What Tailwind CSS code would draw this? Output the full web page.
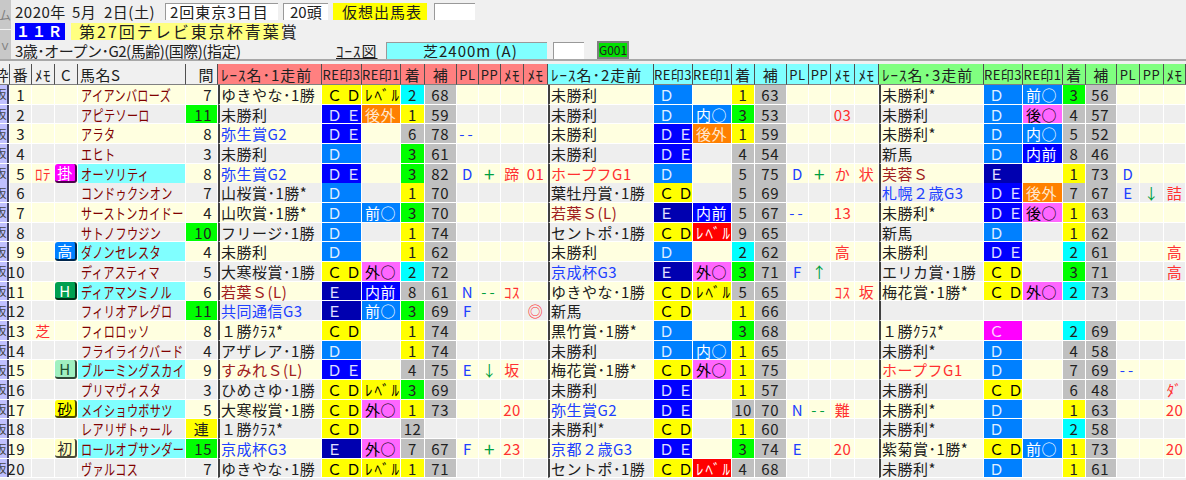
<!DOCTYPE html>
<html lang="ja"><head><meta charset="utf-8"><title>出馬表</title><script src="https://cdn.jsdelivr.net/npm/@tailwindcss/browser@4"></script></head>
<body>
<div class="w-[1186px] h-[480px] overflow-hidden bg-[#f0f0f0] text-[15px] leading-none text-[#202020] font-['Noto_Sans_CJK_JP',sans-serif]">
<div class="flex h-[61px] border-b-2 border-[#a8a8a8]">
<div class="w-[11px] flex flex-col gap-px text-xs text-[#808080]"><div class="flex-1 bg-[#c8c8c8] flex items-center justify-end overflow-hidden"><span class="shrink-0">ム</span></div><div class="flex-1 bg-[#c8c8c8] flex items-center justify-end overflow-hidden"><span class="shrink-0">ｖ</span></div></div>
<div class="flex flex-col pl-1 pt-[2px] whitespace-nowrap">
<div class="flex items-center h-[18px]"><span class="w-[150px] flex"><span class="w-[57px] tracking-[.5px]">2020年</span><span class="w-[32px] tracking-[.5px]">5月</span><span class="tracking-[.5px]">2日(土)</span></span><span class="w-[113px] h-[17px] bg-white border-t border-l border-[#999] flex items-center pl-1 tracking-[1px]">2回東京3日目</span><span class="ml-[5px] w-[45px] h-[17px] bg-white border-t border-l border-[#999] flex items-center pl-[6px]">20頭</span><span class="ml-[5px] w-[94px] h-[17px] bg-[#ffff00] flex items-center pl-[9px] tracking-[1px]">仮想出馬表</span><span class="ml-[7px] w-[41px] h-[17px] bg-white border-t border-l border-[#999]"></span></div>
<div class="flex items-center h-[18px] mt-[2px]"><span class="w-[50px] h-[17px] bg-[#0000ff] text-white flex items-center justify-center font-bold text-[14px] tracking-[2px]">１１Ｒ</span><span class="ml-[6px] w-[212px] h-[17px] bg-[#ffff80] flex items-center pl-2 text-[16px] tracking-[2px]">第27回テレビ東京杯青葉賞</span></div>
<div class="flex items-center h-[18px] mt-[1px]"><span class="w-[321px] tracking-[-.5px]">3歳･オープン･G2(馬齢)(国際)(指定)</span><span class="underline text-[15px] tracking-[1px] w-[50px]">ｺｰｽ図</span><span class="w-[161px] h-[17px] bg-[#80ffff] border-t border-l border-[#999] flex items-center pl-[36px] tracking-[1px]">芝2400m&nbsp;(A)</span><span class="ml-[6px] w-[31px] h-[17px] bg-white border-t border-l border-[#999]"></span><span class="ml-[13px] w-[32px] h-[18px] bg-[#00e000] border-2 border-[#808080] text-xs flex items-center justify-center">G001</span></div>
</div>
</div>
<div class="mt-[3px] tracking-[.5px] grid grid-cols-[10px_22px_23px_23px_108px_32px_104px_40px_39px_24px_32px_22px_22px_23px_24px_106px_39px_39px_23px_32px_22px_22px_24px_24px_105px_39px_40px_23px_31px_23px_24px_22px]">

<div class="grid grid-cols-subgrid col-span-full h-[21px] *:flex *:items-center *:border-r *:border-b *:border-r-[#505050] *:border-b-[#808080] *:whitespace-nowrap">
<p class="justify-end overflow-hidden"><span class="shrink-0">枠</span></p><p class="justify-center">番</p><p class="justify-center">ﾒﾓ</p><p class="justify-center">C</p><p class="pl-[2px]">馬名S</p><p class="justify-end pr-[3px]">間</p>
<p class="bg-[#ff8080] pl-[3px] tracking-[1px]">ﾚｰｽ名･1走前</p><p class="bg-[#ff8080] justify-center text-[13px]">RE印3</p><p class="bg-[#ff8080] justify-center text-[13px]">RE印1</p><p class="bg-[#ff8080] justify-center">着</p><p class="bg-[#ff8080] justify-center">補</p><p class="bg-[#ff8080] justify-center text-[13px]">PL</p><p class="bg-[#ff8080] justify-center text-[13px]">PP</p><p class="bg-[#ff8080] justify-center">ﾒﾓ</p><p class="bg-[#ff8080] justify-center">ﾒﾓ</p>
<p class="bg-[#80ffff] pl-[3px] tracking-[1px]">ﾚｰｽ名･2走前</p><p class="bg-[#80ffff] justify-center text-[13px]">RE印3</p><p class="bg-[#80ffff] justify-center text-[13px]">RE印1</p><p class="bg-[#80ffff] justify-center">着</p><p class="bg-[#80ffff] justify-center">補</p><p class="bg-[#80ffff] justify-center text-[13px]">PL</p><p class="bg-[#80ffff] justify-center text-[13px]">PP</p><p class="bg-[#80ffff] justify-center">ﾒﾓ</p><p class="bg-[#80ffff] justify-center">ﾒﾓ</p>
<p class="bg-[#80ff80] pl-[3px] tracking-[1px]">ﾚｰｽ名･3走前</p><p class="bg-[#80ff80] justify-center text-[13px]">RE印3</p><p class="bg-[#80ff80] justify-center text-[13px]">RE印1</p><p class="bg-[#80ff80] justify-center">着</p><p class="bg-[#80ff80] justify-center">補</p><p class="bg-[#80ff80] justify-center text-[13px]">PL</p><p class="bg-[#80ff80] justify-center text-[13px]">PP</p><p class="bg-[#80ff80] justify-center">ﾒﾓ</p>
</div>

<!-- 1 -->
<div class="grid grid-cols-subgrid col-span-full h-[19.68px] bg-[#ffffe0] *:flex *:items-center *:border-r *:border-b *:border-r-white *:border-b-white *:whitespace-nowrap">
<p><span class="flex items-center justify-end overflow-hidden w-full h-full bg-[#c0c0ff] border-r-2 border-[#404060] text-xs text-[#444]"><span class="shrink-0">阪</span></span></p><p class="justify-end pr-[6px]">1</p><p></p><p></p><p class="pl-[3px] text-[#800000]"><span class="origin-left scale-x-[.74]">アイアンバローズ</span></p><p class="justify-end pr-[5px]">7</p>
<p class="border-l-2 border-l-[#404040] pl-px">ゆきやな･1勝</p><p class="bg-[#ffff00] text-black pl-[5px] tracking-[4px]">ＣＤ</p><p class="bg-[#ffff00] text-black pl-[3px] tracking-[2px]">ﾚﾍﾞﾙ</p><p class="justify-center bg-[#00ffff]">2</p><p class="justify-end pr-[7px] bg-[#c0c0c0]">68</p><p></p><p></p><p></p><p></p>
<p class="border-l-2 border-l-[#404040] pl-px">未勝利</p><p class="bg-[#0080ff] text-[#e0f0ff] pl-[5px]">Ｄ</p><p></p><p class="justify-center bg-[#ffff00]">1</p><p class="justify-end pr-[7px] bg-[#c0c0c0]">63</p><p></p><p></p><p></p><p></p>
<p class="border-l-2 border-l-[#404040] pl-px">未勝利*</p><p class="bg-[#0080ff] text-[#e0f0ff] pl-[5px]">Ｄ</p><p class="bg-[#0080ff] text-white pl-[3px]">前○</p><p class="justify-center bg-[#00ff00]">3</p><p class="justify-end pr-[7px] bg-[#c0c0c0]">56</p><p></p><p></p><p></p>
</div>
<!-- 2 -->
<div class="grid grid-cols-subgrid col-span-full h-[19.68px] bg-[#eeeeee] *:flex *:items-center *:border-r *:border-b *:border-r-white *:border-b-white *:whitespace-nowrap">
<p><span class="flex items-center justify-end overflow-hidden w-full h-full bg-[#c0c0ff] border-r-2 border-[#404060] text-xs text-[#444]"><span class="shrink-0">阪</span></span></p><p class="justify-end pr-[6px]">2</p><p></p><p></p><p class="pl-[3px] text-[#800000]"><span class="origin-left scale-x-[.74]">アピテソーロ</span></p><p class="justify-end pr-[5px] bg-[#00ff00]">11</p>
<p class="border-l-2 border-l-[#404040] pl-px">未勝利</p><p class="bg-[#0000ff] text-[#e0e0ff] pl-[5px] tracking-[4px]">ＤＥ</p><p class="bg-[#ff8000] text-[#ffe8d0] pl-[3px]">後外</p><p class="justify-center bg-[#ffff00]">1</p><p class="justify-end pr-[7px] bg-[#c0c0c0]">59</p><p></p><p></p><p></p><p></p>
<p class="border-l-2 border-l-[#404040] pl-px">未勝利</p><p class="bg-[#0080ff] text-[#e0f0ff] pl-[5px]">Ｄ</p><p class="bg-[#0080ff] text-white pl-[3px]">内○</p><p class="justify-center bg-[#00ff00]">3</p><p class="justify-end pr-[7px] bg-[#c0c0c0]">53</p><p></p><p></p><p class="justify-center text-[#ff3030]">03</p><p></p>
<p class="border-l-2 border-l-[#404040] pl-px">未勝利</p><p class="bg-[#0080ff] text-[#e0f0ff] pl-[5px]">Ｄ</p><p class="bg-[#ff66ff] text-black pl-[3px]">後○</p><p class="justify-center bg-[#c0c0c0]">4</p><p class="justify-end pr-[7px] bg-[#c0c0c0]">57</p><p></p><p></p><p></p>
</div>
<!-- 3 -->
<div class="grid grid-cols-subgrid col-span-full h-[19.68px] bg-[#ffffe0] *:flex *:items-center *:border-r *:border-b *:border-r-white *:border-b-white *:whitespace-nowrap">
<p><span class="flex items-center justify-end overflow-hidden w-full h-full bg-[#c0c0ff] border-r-2 border-[#404060] text-xs text-[#444]"><span class="shrink-0">阪</span></span></p><p class="justify-end pr-[6px]">3</p><p></p><p></p><p class="pl-[3px] text-[#800000]"><span class="origin-left scale-x-[.74]">アラタ</span></p><p class="justify-end pr-[5px]">8</p>
<p class="border-l-2 border-l-[#404040] pl-px text-[#2040ff]">弥生賞G2</p><p class="bg-[#0000ff] text-[#e0e0ff] pl-[5px] tracking-[4px]">ＤＥ</p><p></p><p class="justify-center bg-[#c0c0c0]">6</p><p class="justify-end pr-[7px] bg-[#c0c0c0]">78</p><p class="justify-center text-[#2040ff] tracking-[3px]">--</p><p></p><p></p><p></p>
<p class="border-l-2 border-l-[#404040] pl-px">未勝利</p><p class="bg-[#0000ff] text-[#e0e0ff] pl-[5px] tracking-[4px]">ＤＥ</p><p class="bg-[#ff8000] text-[#ffe8d0] pl-[3px]">後外</p><p class="justify-center bg-[#ffff00]">1</p><p class="justify-end pr-[7px] bg-[#c0c0c0]">59</p><p></p><p></p><p></p><p></p>
<p class="border-l-2 border-l-[#404040] pl-px">未勝利*</p><p class="bg-[#0080ff] text-[#e0f0ff] pl-[5px]">Ｄ</p><p class="bg-[#0080ff] text-white pl-[3px]">内○</p><p class="justify-center bg-[#c0c0c0]">5</p><p class="justify-end pr-[7px] bg-[#c0c0c0]">52</p><p></p><p></p><p></p>
</div>
<!-- 4 -->
<div class="grid grid-cols-subgrid col-span-full h-[19.68px] bg-[#eeeeee] *:flex *:items-center *:border-r *:border-b *:border-r-white *:border-b-white *:whitespace-nowrap">
<p><span class="flex items-center justify-end overflow-hidden w-full h-full bg-[#c0c0ff] border-r-2 border-[#404060] text-xs text-[#444]"><span class="shrink-0">阪</span></span></p><p class="justify-end pr-[6px]">4</p><p></p><p></p><p class="pl-[3px] text-[#800000]"><span class="origin-left scale-x-[.74]">エヒト</span></p><p class="justify-end pr-[5px]">3</p>
<p class="border-l-2 border-l-[#404040] pl-px">未勝利</p><p class="bg-[#0080ff] text-[#e0f0ff] pl-[5px]">Ｄ</p><p></p><p class="justify-center bg-[#00ff00]">3</p><p class="justify-end pr-[7px] bg-[#c0c0c0]">61</p><p></p><p></p><p></p><p></p>
<p class="border-l-2 border-l-[#404040] pl-px">未勝利</p><p class="bg-[#0000ff] text-[#e0e0ff] pl-[5px] tracking-[4px]">ＤＥ</p><p></p><p class="justify-center bg-[#c0c0c0]">4</p><p class="justify-end pr-[7px] bg-[#c0c0c0]">54</p><p></p><p></p><p></p><p></p>
<p class="border-l-2 border-l-[#404040] pl-px">新馬</p><p class="bg-[#0080ff] text-[#e0f0ff] pl-[5px]">Ｄ</p><p class="bg-[#0000ff] text-white pl-[3px]">内前</p><p class="justify-center bg-[#c0c0c0]">8</p><p class="justify-end pr-[7px] bg-[#c0c0c0]">46</p><p></p><p></p><p></p>
</div>
<!-- 5 -->
<div class="grid grid-cols-subgrid col-span-full h-[19.68px] bg-[#ffffe0] *:flex *:items-center *:border-r *:border-b *:border-r-white *:border-b-white *:whitespace-nowrap">
<p><span class="flex items-center justify-end overflow-hidden w-full h-full bg-[#c0c0ff] border-r-2 border-[#404060] text-xs text-[#444]"><span class="shrink-0">阪</span></span></p><p class="justify-end pr-[6px]">5</p><p class="justify-center text-[#ff3030]">ﾛﾃ</p><p><span class="flex items-center justify-center w-full h-full rounded-[3px] border-r-2 border-b-2 border-black/70 bg-[#ff00ff] text-white">掛</span></p><p class="pl-[3px] text-[#800000] bg-[#80ffff]"><span class="origin-left scale-x-[.74]">オーソリティ</span></p><p class="justify-end pr-[5px]">8</p>
<p class="border-l-2 border-l-[#404040] pl-px text-[#2040ff]">弥生賞G2</p><p class="bg-[#0000ff] text-[#e0e0ff] pl-[5px] tracking-[4px]">ＤＥ</p><p></p><p class="justify-center bg-[#00ff00]">3</p><p class="justify-end pr-[7px] bg-[#c0c0c0]">82</p><p class="justify-center text-[#2040ff]">D</p><p class="justify-center text-[#00a040] text-[19px]">+</p><p class="justify-center text-[#ff3030]">蹄</p><p class="justify-center text-[#ff3030]">01</p>
<p class="border-l-2 border-l-[#404040] pl-px text-[#ff3030]">ホープフG1</p><p class="bg-[#0080ff] text-[#e0f0ff] pl-[5px]">Ｄ</p><p></p><p class="justify-center bg-[#c0c0c0]">5</p><p class="justify-end pr-[7px] bg-[#c0c0c0]">75</p><p class="justify-center text-[#2040ff]">D</p><p class="justify-center text-[#00a040] text-[19px]">+</p><p class="justify-center text-[#ff3030]">か</p><p class="justify-center text-[#ff3030]">状</p>
<p class="border-l-2 border-l-[#404040] pl-px text-[#a02020]">芙蓉Ｓ</p><p class="bg-[#0000b0] text-[#e0e0ff] pl-[5px]">Ｅ</p><p></p><p class="justify-center bg-[#ffff00]">1</p><p class="justify-end pr-[7px] bg-[#c0c0c0]">73</p><p class="justify-center text-[#2040ff]">D</p><p></p><p></p>
</div>
<!-- 6 -->
<div class="grid grid-cols-subgrid col-span-full h-[19.68px] bg-[#eeeeee] *:flex *:items-center *:border-r *:border-b *:border-r-white *:border-b-white *:whitespace-nowrap">
<p><span class="flex items-center justify-end overflow-hidden w-full h-full bg-[#c0c0ff] border-r-2 border-[#404060] text-xs text-[#444]"><span class="shrink-0">阪</span></span></p><p class="justify-end pr-[6px]">6</p><p></p><p></p><p class="pl-[3px] text-[#800000]"><span class="origin-left scale-x-[.74]">コンドゥクシオン</span></p><p class="justify-end pr-[5px]">7</p>
<p class="border-l-2 border-l-[#404040] pl-px">山桜賞･1勝*</p><p class="bg-[#0080ff] text-[#e0f0ff] pl-[5px]">Ｄ</p><p></p><p class="justify-center bg-[#ffff00]">1</p><p class="justify-end pr-[7px] bg-[#c0c0c0]">70</p><p></p><p></p><p></p><p></p>
<p class="border-l-2 border-l-[#404040] pl-px">葉牡丹賞･1勝</p><p class="bg-[#ffff00] text-black pl-[5px] tracking-[4px]">ＣＤ</p><p></p><p class="justify-center bg-[#c0c0c0]">5</p><p class="justify-end pr-[7px] bg-[#c0c0c0]">69</p><p></p><p></p><p></p><p></p>
<p class="border-l-2 border-l-[#404040] pl-px text-[#2040ff]">札幌２歳G3</p><p class="bg-[#0000ff] text-[#e0e0ff] pl-[5px] tracking-[4px]">ＤＥ</p><p class="bg-[#ff8000] text-[#ffe8d0] pl-[3px]">後外</p><p class="justify-center bg-[#c0c0c0]">7</p><p class="justify-end pr-[7px] bg-[#c0c0c0]">67</p><p class="justify-center text-[#2040ff]">E</p><p class="justify-center text-[#00a040]">↓</p><p class="justify-center text-[#ff3030]">詰</p>
</div>
<!-- 7 -->
<div class="grid grid-cols-subgrid col-span-full h-[19.68px] bg-[#ffffe0] *:flex *:items-center *:border-r *:border-b *:border-r-white *:border-b-white *:whitespace-nowrap">
<p><span class="flex items-center justify-end overflow-hidden w-full h-full bg-[#c0c0ff] border-r-2 border-[#404060] text-xs text-[#444]"><span class="shrink-0">阪</span></span></p><p class="justify-end pr-[6px]">7</p><p></p><p></p><p class="pl-[3px] text-[#800000]"><span class="origin-left scale-x-[.74]">サーストンカイドー</span></p><p class="justify-end pr-[5px]">4</p>
<p class="border-l-2 border-l-[#404040] pl-px">山吹賞･1勝*</p><p class="bg-[#0080ff] text-[#e0f0ff] pl-[5px]">Ｄ</p><p class="bg-[#0080ff] text-white pl-[3px]">前○</p><p class="justify-center bg-[#00ff00]">3</p><p class="justify-end pr-[7px] bg-[#c0c0c0]">70</p><p></p><p></p><p></p><p></p>
<p class="border-l-2 border-l-[#404040] pl-px text-[#a02020]">若葉Ｓ(L)</p><p class="bg-[#0000b0] text-[#e0e0ff] pl-[5px]">Ｅ</p><p class="bg-[#0000ff] text-white pl-[3px]">内前</p><p class="justify-center bg-[#c0c0c0]">5</p><p class="justify-end pr-[7px] bg-[#c0c0c0]">67</p><p class="justify-center text-[#2040ff] tracking-[3px]">--</p><p></p><p class="justify-center text-[#ff3030]">13</p><p></p>
<p class="border-l-2 border-l-[#404040] pl-px">未勝利*</p><p class="bg-[#0000ff] text-[#e0e0ff] pl-[5px] tracking-[4px]">ＤＥ</p><p class="bg-[#ff66ff] text-black pl-[3px]">後○</p><p class="justify-center bg-[#ffff00]">1</p><p class="justify-end pr-[7px] bg-[#c0c0c0]">63</p><p></p><p></p><p></p>
</div>
<!-- 8 -->
<div class="grid grid-cols-subgrid col-span-full h-[19.68px] bg-[#eeeeee] *:flex *:items-center *:border-r *:border-b *:border-r-white *:border-b-white *:whitespace-nowrap">
<p><span class="flex items-center justify-end overflow-hidden w-full h-full bg-[#c0c0ff] border-r-2 border-[#404060] text-xs text-[#444]"><span class="shrink-0">阪</span></span></p><p class="justify-end pr-[6px]">8</p><p></p><p></p><p class="pl-[3px] text-[#800000]"><span class="origin-left scale-x-[.74]">サトノフウジン</span></p><p class="justify-end pr-[5px] bg-[#00ff00]">10</p>
<p class="border-l-2 border-l-[#404040] pl-px">フリージ･1勝</p><p class="bg-[#0080ff] text-[#e0f0ff] pl-[5px]">Ｄ</p><p></p><p class="justify-center bg-[#ffff00]">1</p><p class="justify-end pr-[7px] bg-[#c0c0c0]">74</p><p></p><p></p><p></p><p></p>
<p class="border-l-2 border-l-[#404040] pl-px">セントポ･1勝</p><p class="bg-[#ffff00] text-black pl-[5px] tracking-[4px]">ＣＤ</p><p class="bg-[#ff0000] text-white pl-[3px] tracking-[2px]">ﾚﾍﾞﾙ</p><p class="justify-center bg-[#c0c0c0]">9</p><p class="justify-end pr-[7px] bg-[#c0c0c0]">65</p><p></p><p></p><p></p><p></p>
<p class="border-l-2 border-l-[#404040] pl-px">新馬</p><p class="bg-[#0080ff] text-[#e0f0ff] pl-[5px]">Ｄ</p><p></p><p class="justify-center bg-[#ffff00]">1</p><p class="justify-end pr-[7px] bg-[#c0c0c0]">62</p><p></p><p></p><p></p>
</div>
<!-- 9 -->
<div class="grid grid-cols-subgrid col-span-full h-[19.68px] bg-[#ffffe0] *:flex *:items-center *:border-r *:border-b *:border-r-white *:border-b-white *:whitespace-nowrap">
<p><span class="flex items-center justify-end overflow-hidden w-full h-full bg-[#c0c0ff] border-r-2 border-[#404060] text-xs text-[#444]"><span class="shrink-0">阪</span></span></p><p class="justify-end pr-[6px]">9</p><p></p><p><span class="flex items-center justify-center w-full h-full rounded-[3px] border-r-2 border-b-2 border-black/70 bg-[#0080ff] text-white">高</span></p><p class="pl-[3px] text-[#800000] bg-[#80ffff]"><span class="origin-left scale-x-[.74]">ダノンセレスタ</span></p><p class="justify-end pr-[5px]">4</p>
<p class="border-l-2 border-l-[#404040] pl-px">未勝利</p><p class="bg-[#0080ff] text-[#e0f0ff] pl-[5px]">Ｄ</p><p></p><p class="justify-center bg-[#ffff00]">1</p><p class="justify-end pr-[7px] bg-[#c0c0c0]">62</p><p></p><p></p><p></p><p></p>
<p class="border-l-2 border-l-[#404040] pl-px">未勝利</p><p class="bg-[#0080ff] text-[#e0f0ff] pl-[5px]">Ｄ</p><p></p><p class="justify-center bg-[#00ffff]">2</p><p class="justify-end pr-[7px] bg-[#c0c0c0]">62</p><p></p><p></p><p class="justify-center text-[#ff3030]">高</p><p></p>
<p class="border-l-2 border-l-[#404040] pl-px">未勝利</p><p class="bg-[#0000ff] text-[#e0e0ff] pl-[5px] tracking-[4px]">ＤＥ</p><p></p><p class="justify-center bg-[#00ffff]">2</p><p class="justify-end pr-[7px] bg-[#c0c0c0]">61</p><p></p><p></p><p class="justify-center text-[#ff3030]">高</p>
</div>
<!-- 10 -->
<div class="grid grid-cols-subgrid col-span-full h-[19.68px] bg-[#eeeeee] *:flex *:items-center *:border-r *:border-b *:border-r-white *:border-b-white *:whitespace-nowrap">
<p><span class="flex items-center justify-end overflow-hidden w-full h-full bg-[#c0c0ff] border-r-2 border-[#404060] text-xs text-[#444]"><span class="shrink-0">阪</span></span></p><p class="justify-end pr-[6px]">10</p><p></p><p></p><p class="pl-[3px] text-[#800000]"><span class="origin-left scale-x-[.74]">ディアスティマ</span></p><p class="justify-end pr-[5px]">5</p>
<p class="border-l-2 border-l-[#404040] pl-px">大寒桜賞･1勝</p><p class="bg-[#ffff00] text-black pl-[5px] tracking-[4px]">ＣＤ</p><p class="bg-[#ff66ff] text-black pl-[3px]">外○</p><p class="justify-center bg-[#00ffff]">2</p><p class="justify-end pr-[7px] bg-[#c0c0c0]">72</p><p></p><p></p><p></p><p></p>
<p class="border-l-2 border-l-[#404040] pl-px text-[#2040ff]">京成杯G3</p><p class="bg-[#0000b0] text-[#e0e0ff] pl-[5px]">Ｅ</p><p class="bg-[#ff66ff] text-black pl-[3px]">外○</p><p class="justify-center bg-[#00ff00]">3</p><p class="justify-end pr-[7px] bg-[#c0c0c0]">71</p><p class="justify-center text-[#2040ff]">F</p><p class="justify-center text-[#00a040]">↑</p><p></p><p></p>
<p class="border-l-2 border-l-[#404040] pl-px">エリカ賞･1勝</p><p class="bg-[#ffff00] text-black pl-[5px] tracking-[4px]">ＣＤ</p><p></p><p class="justify-center bg-[#00ff00]">3</p><p class="justify-end pr-[7px] bg-[#c0c0c0]">71</p><p></p><p></p><p class="justify-center text-[#ff3030]">高</p>
</div>
<!-- 11 -->
<div class="grid grid-cols-subgrid col-span-full h-[19.68px] bg-[#ffffe0] *:flex *:items-center *:border-r *:border-b *:border-r-white *:border-b-white *:whitespace-nowrap">
<p><span class="flex items-center justify-end overflow-hidden w-full h-full bg-[#c0c0ff] border-r-2 border-[#404060] text-xs text-[#444]"><span class="shrink-0">阪</span></span></p><p class="justify-end pr-[6px]">11</p><p></p><p><span class="flex items-center justify-center w-full h-full rounded-[3px] border-r-2 border-b-2 border-black/70 bg-[#00a050] text-white">H</span></p><p class="pl-[3px] text-[#800000] bg-[#80ffff]"><span class="origin-left scale-x-[.74]">ディアマンミノル</span></p><p class="justify-end pr-[5px]">6</p>
<p class="border-l-2 border-l-[#404040] pl-px text-[#a02020]">若葉Ｓ(L)</p><p class="bg-[#0000b0] text-[#e0e0ff] pl-[5px]">Ｅ</p><p class="bg-[#0000ff] text-white pl-[3px]">内前</p><p class="justify-center bg-[#c0c0c0]">8</p><p class="justify-end pr-[7px] bg-[#c0c0c0]">61</p><p class="justify-center text-[#2040ff]">N</p><p class="justify-center text-[#00a040] tracking-[3px]">--</p><p class="justify-center text-[#ff3030]">ｺｽ</p><p></p>
<p class="border-l-2 border-l-[#404040] pl-px">ゆきやな･1勝</p><p class="bg-[#ffff00] text-black pl-[5px] tracking-[4px]">ＣＤ</p><p class="bg-[#ffff00] text-black pl-[3px] tracking-[2px]">ﾚﾍﾞﾙ</p><p class="justify-center bg-[#c0c0c0]">5</p><p class="justify-end pr-[7px] bg-[#c0c0c0]">65</p><p></p><p></p><p class="justify-center text-[#ff3030]">ｺｽ</p><p class="justify-center text-[#ff3030]">坂</p>
<p class="border-l-2 border-l-[#404040] pl-px">梅花賞･1勝*</p><p class="bg-[#ffff00] text-black pl-[5px] tracking-[4px]">ＣＤ</p><p class="bg-[#ff66ff] text-black pl-[3px]">外○</p><p class="justify-center bg-[#00ffff]">2</p><p class="justify-end pr-[7px] bg-[#c0c0c0]">73</p><p></p><p></p><p></p>
</div>
<!-- 12 -->
<div class="grid grid-cols-subgrid col-span-full h-[19.68px] bg-[#eeeeee] *:flex *:items-center *:border-r *:border-b *:border-r-white *:border-b-white *:whitespace-nowrap">
<p><span class="flex items-center justify-end overflow-hidden w-full h-full bg-[#c0c0ff] border-r-2 border-[#404060] text-xs text-[#444]"><span class="shrink-0">阪</span></span></p><p class="justify-end pr-[6px]">12</p><p></p><p></p><p class="pl-[3px] text-[#800000]"><span class="origin-left scale-x-[.74]">フィリオアレグロ</span></p><p class="justify-end pr-[5px] bg-[#00ff00]">11</p>
<p class="border-l-2 border-l-[#404040] pl-px text-[#2040ff]">共同通信G3</p><p class="bg-[#0000b0] text-[#e0e0ff] pl-[5px]">Ｅ</p><p class="bg-[#0080ff] text-white pl-[3px]">前○</p><p class="justify-center bg-[#00ff00]">3</p><p class="justify-end pr-[7px] bg-[#c0c0c0]">69</p><p class="justify-center text-[#2040ff]">F</p><p></p><p></p><p class="justify-center text-[#ff3030]">◎</p>
<p class="border-l-2 border-l-[#404040] pl-px">新馬</p><p class="bg-[#ffff00] text-black pl-[5px] tracking-[4px]">ＣＤ</p><p></p><p class="justify-center bg-[#ffff00]">1</p><p class="justify-end pr-[7px] bg-[#c0c0c0]">66</p><p></p><p></p><p></p><p></p>
<p class="border-l-2 border-l-[#404040] pl-px"></p><p></p><p></p><p></p><p></p><p></p><p></p><p></p>
</div>
<!-- 13 -->
<div class="grid grid-cols-subgrid col-span-full h-[19.68px] bg-[#ffffe0] *:flex *:items-center *:border-r *:border-b *:border-r-white *:border-b-white *:whitespace-nowrap">
<p><span class="flex items-center justify-end overflow-hidden w-full h-full bg-[#c0c0ff] border-r-2 border-[#404060] text-xs text-[#444]"><span class="shrink-0">阪</span></span></p><p class="justify-end pr-[6px]">13</p><p class="justify-center text-[#ff3030]">芝</p><p></p><p class="pl-[3px] text-[#800000]"><span class="origin-left scale-x-[.74]">フィロロッソ</span></p><p class="justify-end pr-[5px]">8</p>
<p class="border-l-2 border-l-[#404040] pl-px">１勝ｸﾗｽ*</p><p class="bg-[#ffff00] text-black pl-[5px] tracking-[4px]">ＣＤ</p><p></p><p class="justify-center bg-[#ffff00]">1</p><p class="justify-end pr-[7px] bg-[#c0c0c0]">74</p><p></p><p></p><p></p><p></p>
<p class="border-l-2 border-l-[#404040] pl-px">黒竹賞･1勝*</p><p class="bg-[#0080ff] text-[#e0f0ff] pl-[5px]">Ｄ</p><p></p><p class="justify-center bg-[#00ff00]">3</p><p class="justify-end pr-[7px] bg-[#c0c0c0]">68</p><p></p><p></p><p></p><p></p>
<p class="border-l-2 border-l-[#404040] pl-px">１勝ｸﾗｽ*</p><p class="bg-[#ff00ff] text-[#ffd0ff] pl-[5px]">Ｃ</p><p></p><p class="justify-center bg-[#00ffff]">2</p><p class="justify-end pr-[7px] bg-[#c0c0c0]">69</p><p></p><p></p><p></p>
</div>
<!-- 14 -->
<div class="grid grid-cols-subgrid col-span-full h-[19.68px] bg-[#eeeeee] *:flex *:items-center *:border-r *:border-b *:border-r-white *:border-b-white *:whitespace-nowrap">
<p><span class="flex items-center justify-end overflow-hidden w-full h-full bg-[#c0c0ff] border-r-2 border-[#404060] text-xs text-[#444]"><span class="shrink-0">阪</span></span></p><p class="justify-end pr-[6px]">14</p><p></p><p></p><p class="pl-[3px] text-[#800000]"><span class="origin-left scale-x-[.74]">フライライクバード</span></p><p class="justify-end pr-[5px]">4</p>
<p class="border-l-2 border-l-[#404040] pl-px">アザレア･1勝</p><p class="bg-[#0080ff] text-[#e0f0ff] pl-[5px]">Ｄ</p><p></p><p class="justify-center bg-[#ffff00]">1</p><p class="justify-end pr-[7px] bg-[#c0c0c0]">74</p><p></p><p></p><p></p><p></p>
<p class="border-l-2 border-l-[#404040] pl-px">未勝利</p><p class="bg-[#0080ff] text-[#e0f0ff] pl-[5px]">Ｄ</p><p class="bg-[#0080ff] text-white pl-[3px]">内○</p><p class="justify-center bg-[#ffff00]">1</p><p class="justify-end pr-[7px] bg-[#c0c0c0]">65</p><p></p><p></p><p></p><p></p>
<p class="border-l-2 border-l-[#404040] pl-px">未勝利*</p><p class="bg-[#0080ff] text-[#e0f0ff] pl-[5px]">Ｄ</p><p></p><p class="justify-center bg-[#c0c0c0]">4</p><p class="justify-end pr-[7px] bg-[#c0c0c0]">58</p><p></p><p></p><p></p>
</div>
<!-- 15 -->
<div class="grid grid-cols-subgrid col-span-full h-[19.68px] bg-[#ffffe0] *:flex *:items-center *:border-r *:border-b *:border-r-white *:border-b-white *:whitespace-nowrap">
<p><span class="flex items-center justify-end overflow-hidden w-full h-full bg-[#c0c0ff] border-r-2 border-[#404060] text-xs text-[#444]"><span class="shrink-0">阪</span></span></p><p class="justify-end pr-[6px]">15</p><p></p><p><span class="flex items-center justify-center w-full h-full rounded-[3px] border-r-2 border-b-2 border-black/70 bg-[#a0f0c0] text-[#205030]">H</span></p><p class="pl-[3px] text-[#800000] bg-[#80ffff]"><span class="origin-left scale-x-[.74]">ブルーミングスカイ</span></p><p class="justify-end pr-[5px]">9</p>
<p class="border-l-2 border-l-[#404040] pl-px text-[#a02020]">すみれＳ(L)</p><p class="bg-[#0000ff] text-[#e0e0ff] pl-[5px] tracking-[4px]">ＤＥ</p><p></p><p class="justify-center bg-[#c0c0c0]">4</p><p class="justify-end pr-[7px] bg-[#c0c0c0]">75</p><p class="justify-center text-[#2040ff]">E</p><p class="justify-center text-[#00a040]">↓</p><p class="justify-center text-[#ff3030]">坂</p><p></p>
<p class="border-l-2 border-l-[#404040] pl-px">梅花賞･1勝*</p><p class="bg-[#ffff00] text-black pl-[5px] tracking-[4px]">ＣＤ</p><p class="bg-[#ff66ff] text-black pl-[3px]">外○</p><p class="justify-center bg-[#ffff00]">1</p><p class="justify-end pr-[7px] bg-[#c0c0c0]">75</p><p></p><p></p><p></p><p></p>
<p class="border-l-2 border-l-[#404040] pl-px text-[#ff3030]">ホープフG1</p><p class="bg-[#0080ff] text-[#e0f0ff] pl-[5px]">Ｄ</p><p></p><p class="justify-center bg-[#c0c0c0]">7</p><p class="justify-end pr-[7px] bg-[#c0c0c0]">69</p><p class="justify-center text-[#2040ff] tracking-[3px]">--</p><p></p><p></p>
</div>
<!-- 16 -->
<div class="grid grid-cols-subgrid col-span-full h-[19.68px] bg-[#eeeeee] *:flex *:items-center *:border-r *:border-b *:border-r-white *:border-b-white *:whitespace-nowrap">
<p><span class="flex items-center justify-end overflow-hidden w-full h-full bg-[#c0c0ff] border-r-2 border-[#404060] text-xs text-[#444]"><span class="shrink-0">阪</span></span></p><p class="justify-end pr-[6px]">16</p><p></p><p></p><p class="pl-[3px] text-[#800000]"><span class="origin-left scale-x-[.74]">プリマヴィスタ</span></p><p class="justify-end pr-[5px]">3</p>
<p class="border-l-2 border-l-[#404040] pl-px">ひめさゆ･1勝</p><p class="bg-[#ffff00] text-black pl-[5px] tracking-[4px]">ＣＤ</p><p class="bg-[#ffff00] text-black pl-[3px] tracking-[2px]">ﾚﾍﾞﾙ</p><p class="justify-center bg-[#00ff00]">3</p><p class="justify-end pr-[7px] bg-[#c0c0c0]">69</p><p></p><p></p><p></p><p></p>
<p class="border-l-2 border-l-[#404040] pl-px">未勝利</p><p class="bg-[#0000ff] text-[#e0e0ff] pl-[5px] tracking-[4px]">ＤＥ</p><p></p><p class="justify-center bg-[#ffff00]">1</p><p class="justify-end pr-[7px] bg-[#c0c0c0]">57</p><p></p><p></p><p></p><p></p>
<p class="border-l-2 border-l-[#404040] pl-px">未勝利</p><p class="bg-[#ffff00] text-black pl-[5px] tracking-[4px]">ＣＤ</p><p></p><p class="justify-center bg-[#c0c0c0]">6</p><p class="justify-end pr-[7px] bg-[#c0c0c0]">48</p><p></p><p></p><p class="justify-center text-[#ff3030]">ﾀﾞ</p>
</div>
<!-- 17 -->
<div class="grid grid-cols-subgrid col-span-full h-[19.68px] bg-[#ffffe0] *:flex *:items-center *:border-r *:border-b *:border-r-white *:border-b-white *:whitespace-nowrap">
<p><span class="flex items-center justify-end overflow-hidden w-full h-full bg-[#c0c0ff] border-r-2 border-[#404060] text-xs text-[#444]"><span class="shrink-0">阪</span></span></p><p class="justify-end pr-[6px]">17</p><p></p><p><span class="flex items-center justify-center w-full h-full rounded-[3px] border-r-2 border-b-2 border-black/70 bg-[#ffff00] text-black">砂</span></p><p class="pl-[3px] text-[#800000] bg-[#80ffff]"><span class="origin-left scale-x-[.74]">メイショウボサツ</span></p><p class="justify-end pr-[5px]">5</p>
<p class="border-l-2 border-l-[#404040] pl-px">大寒桜賞･1勝</p><p class="bg-[#ffff00] text-black pl-[5px] tracking-[4px]">ＣＤ</p><p class="bg-[#ff66ff] text-black pl-[3px]">外○</p><p class="justify-center bg-[#ffff00]">1</p><p class="justify-end pr-[7px] bg-[#c0c0c0]">73</p><p></p><p></p><p class="justify-center text-[#ff3030]">20</p><p></p>
<p class="border-l-2 border-l-[#404040] pl-px text-[#2040ff]">弥生賞G2</p><p class="bg-[#0000ff] text-[#e0e0ff] pl-[5px] tracking-[4px]">ＤＥ</p><p></p><p class="justify-center bg-[#c0c0c0]">10</p><p class="justify-end pr-[7px] bg-[#c0c0c0]">70</p><p class="justify-center text-[#2040ff]">N</p><p class="justify-center text-[#00a040] tracking-[3px]">--</p><p class="justify-center text-[#ff3030]">難</p><p></p>
<p class="border-l-2 border-l-[#404040] pl-px">未勝利*</p><p class="bg-[#0080ff] text-[#e0f0ff] pl-[5px]">Ｄ</p><p></p><p class="justify-center bg-[#ffff00]">1</p><p class="justify-end pr-[7px] bg-[#c0c0c0]">63</p><p></p><p></p><p class="justify-center text-[#ff3030]">20</p>
</div>
<!-- 18 -->
<div class="grid grid-cols-subgrid col-span-full h-[19.68px] bg-[#eeeeee] *:flex *:items-center *:border-r *:border-b *:border-r-white *:border-b-white *:whitespace-nowrap">
<p><span class="flex items-center justify-end overflow-hidden w-full h-full bg-[#c0c0ff] border-r-2 border-[#404060] text-xs text-[#444]"><span class="shrink-0">阪</span></span></p><p class="justify-end pr-[6px]">18</p><p></p><p></p><p class="pl-[3px] text-[#800000]"><span class="origin-left scale-x-[.74]">レアリザトゥール</span></p><p class="justify-center bg-[#ffff00]">連</p>
<p class="border-l-2 border-l-[#404040] pl-px">１勝ｸﾗｽ*</p><p class="bg-[#ffff00] text-black pl-[5px] tracking-[4px]">ＣＤ</p><p></p><p class="justify-center bg-[#c0c0c0]">12</p><p class="justify-end pr-[7px]"></p><p></p><p></p><p></p><p></p>
<p class="border-l-2 border-l-[#404040] pl-px">未勝利*</p><p class="bg-[#ffff00] text-black pl-[5px] tracking-[4px]">ＣＤ</p><p></p><p class="justify-center bg-[#ffff00]">1</p><p class="justify-end pr-[7px] bg-[#c0c0c0]">60</p><p></p><p></p><p></p><p></p>
<p class="border-l-2 border-l-[#404040] pl-px">未勝利*</p><p class="bg-[#0080ff] text-[#e0f0ff] pl-[5px]">Ｄ</p><p></p><p class="justify-center bg-[#00ffff]">2</p><p class="justify-end pr-[7px] bg-[#c0c0c0]">58</p><p></p><p></p><p></p>
</div>
<!-- 19 -->
<div class="grid grid-cols-subgrid col-span-full h-[19.68px] bg-[#ffffe0] *:flex *:items-center *:border-r *:border-b *:border-r-white *:border-b-white *:whitespace-nowrap">
<p><span class="flex items-center justify-end overflow-hidden w-full h-full bg-[#c0c0ff] border-r-2 border-[#404060] text-xs text-[#444]"><span class="shrink-0">阪</span></span></p><p class="justify-end pr-[6px]">19</p><p></p><p><span class="flex items-center justify-center w-full h-full rounded-[3px] border-r-2 border-b-2 border-black/70 bg-[#ffffc0] text-[#303030]">初</span></p><p class="pl-[3px] text-[#800000] bg-[#80ffff]"><span class="origin-left scale-x-[.74]">ロールオブサンダー</span></p><p class="justify-end pr-[5px] bg-[#00ff00]">15</p>
<p class="border-l-2 border-l-[#404040] pl-px text-[#2040ff]">京成杯G3</p><p class="bg-[#0000b0] text-[#e0e0ff] pl-[5px]">Ｅ</p><p class="bg-[#ff66ff] text-black pl-[3px]">外○</p><p class="justify-center bg-[#c0c0c0]">7</p><p class="justify-end pr-[7px] bg-[#c0c0c0]">67</p><p class="justify-center text-[#2040ff]">F</p><p class="justify-center text-[#00a040] text-[19px]">+</p><p class="justify-center text-[#ff3030]">23</p><p></p>
<p class="border-l-2 border-l-[#404040] pl-px text-[#2040ff]">京都２歳G3</p><p class="bg-[#0000ff] text-[#e0e0ff] pl-[5px] tracking-[4px]">ＤＥ</p><p></p><p class="justify-center bg-[#00ff00]">3</p><p class="justify-end pr-[7px] bg-[#c0c0c0]">74</p><p class="justify-center text-[#2040ff]">E</p><p></p><p class="justify-center text-[#ff3030]">20</p><p></p>
<p class="border-l-2 border-l-[#404040] pl-px">紫菊賞･1勝*</p><p class="bg-[#ffff00] text-black pl-[5px] tracking-[4px]">ＣＤ</p><p class="bg-[#0080ff] text-white pl-[3px]">前○</p><p class="justify-center bg-[#ffff00]">1</p><p class="justify-end pr-[7px] bg-[#c0c0c0]">73</p><p></p><p></p><p class="justify-center text-[#ff3030]">20</p>
</div>
<!-- 20 -->
<div class="grid grid-cols-subgrid col-span-full h-[19.68px] bg-[#eeeeee] *:flex *:items-center *:border-r *:border-b *:border-r-white *:border-b-white *:whitespace-nowrap">
<p><span class="flex items-center justify-end overflow-hidden w-full h-full bg-[#c0c0ff] border-r-2 border-[#404060] text-xs text-[#444]"><span class="shrink-0">阪</span></span></p><p class="justify-end pr-[6px]">20</p><p></p><p></p><p class="pl-[3px] text-[#800000]"><span class="origin-left scale-x-[.74]">ヴァルコス</span></p><p class="justify-end pr-[5px]">7</p>
<p class="border-l-2 border-l-[#404040] pl-px">ゆきやな･1勝</p><p class="bg-[#ffff00] text-black pl-[5px] tracking-[4px]">ＣＤ</p><p class="bg-[#ffff00] text-black pl-[3px] tracking-[2px]">ﾚﾍﾞﾙ</p><p class="justify-center bg-[#ffff00]">1</p><p class="justify-end pr-[7px] bg-[#c0c0c0]">71</p><p></p><p></p><p></p><p></p>
<p class="border-l-2 border-l-[#404040] pl-px">セントポ･1勝</p><p class="bg-[#ffff00] text-black pl-[5px] tracking-[4px]">ＣＤ</p><p class="bg-[#ff0000] text-white pl-[3px] tracking-[2px]">ﾚﾍﾞﾙ</p><p class="justify-center bg-[#c0c0c0]">4</p><p class="justify-end pr-[7px] bg-[#c0c0c0]">68</p><p></p><p></p><p></p><p></p>
<p class="border-l-2 border-l-[#404040] pl-px">未勝利*</p><p class="bg-[#0080ff] text-[#e0f0ff] pl-[5px]">Ｄ</p><p></p><p class="justify-center bg-[#ffff00]">1</p><p class="justify-end pr-[7px] bg-[#c0c0c0]">61</p><p></p><p></p><p></p>
</div>
</div>
</div>
</body></html>
